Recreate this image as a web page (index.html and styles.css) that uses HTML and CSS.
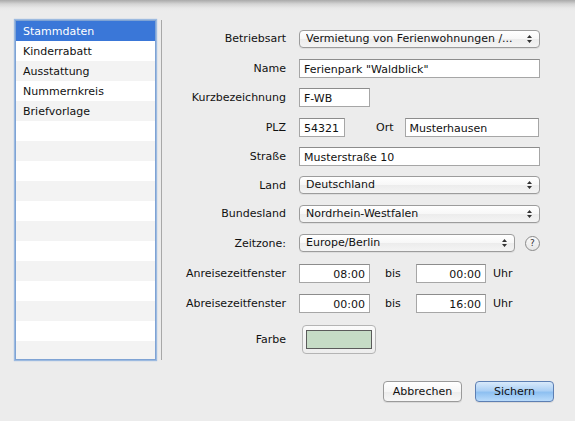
FILE: index.html
```html
<!DOCTYPE html>
<html lang="de">
<head>
<meta charset="utf-8">
<title>Stammdaten</title>
<link rel="stylesheet" href="styles.css">
</head>
<body>
<div class="window">
  <div class="main">
    <div class="sidebar">
      <ul class="list">
        <li class="item selected">Stammdaten</li>
        <li class="item">Kinderrabatt</li>
        <li class="item">Ausstattung</li>
        <li class="item">Nummernkreis</li>
        <li class="item">Briefvorlage</li>
        <li class="item"></li><li class="item"></li><li class="item"></li>
        <li class="item"></li><li class="item"></li><li class="item"></li>
        <li class="item"></li><li class="item"></li><li class="item"></li>
        <li class="item"></li><li class="item"></li><li class="item"></li>
      </ul>
    </div>
    <div class="separator"></div>
    <div class="form">
      <label class="lbl">Betriebsart</label>
      <div class="cell"><div class="popup w-full"><span class="ptext">Vermietung von Ferienwohnungen /...</span><svg class="arrows" width="7" height="10" viewBox="0 0 7 10"><path d="M1 4 L3.5 1 L6 4 Z M1 6 L3.5 9 L6 6 Z" fill="#333"/></svg></div></div>

      <label class="lbl">Name</label>
      <div class="cell"><div class="field w-full">Ferienpark "Waldblick"</div></div>

      <label class="lbl">Kurzbezeichnung</label>
      <div class="cell"><div class="field w-short">F-WB</div></div>

      <label class="lbl">PLZ</label>
      <div class="cell"><div class="field w-plz">54321</div><span class="inlbl ort">Ort</span><div class="field w-ort">Musterhausen</div></div>

      <label class="lbl">Straße</label>
      <div class="cell"><div class="field w-full">Musterstraße 10</div></div>

      <label class="lbl">Land</label>
      <div class="cell"><div class="popup w-full"><span class="ptext">Deutschland</span><svg class="arrows" width="7" height="10" viewBox="0 0 7 10"><path d="M1 4 L3.5 1 L6 4 Z M1 6 L3.5 9 L6 6 Z" fill="#333"/></svg></div></div>

      <label class="lbl">Bundesland</label>
      <div class="cell"><div class="popup w-full"><span class="ptext">Nordrhein-Westfalen</span><svg class="arrows" width="7" height="10" viewBox="0 0 7 10"><path d="M1 4 L3.5 1 L6 4 Z M1 6 L3.5 9 L6 6 Z" fill="#333"/></svg></div></div>

      <label class="lbl">Zeitzone:</label>
      <div class="cell"><div class="popup w-tz"><span class="ptext">Europe/Berlin</span><svg class="arrows" width="7" height="10" viewBox="0 0 7 10"><path d="M1 4 L3.5 1 L6 4 Z M1 6 L3.5 9 L6 6 Z" fill="#333"/></svg></div><span class="help">?</span></div>

      <label class="lbl">Anreisezeitfenster</label>
      <div class="cell"><div class="field w-time right">08:00</div><span class="inlbl bis">bis</span><div class="field w-time2 right">00:00</div><span class="inlbl uhr">Uhr</span></div>

      <label class="lbl">Abreisezeitfenster</label>
      <div class="cell"><div class="field w-time right">00:00</div><span class="inlbl bis">bis</span><div class="field w-time2 right">16:00</div><span class="inlbl uhr">Uhr</span></div>

      <label class="lbl">Farbe</label>
      <div class="cell"><div class="well"><div class="swatch"></div></div></div>
    </div>
  </div>
  <div class="footer">
    <button class="btn">Abbrechen</button>
    <button class="btn default">Sichern</button>
  </div>
</div>
</body>
</html>
```

FILE: styles.css
```css
html, body {
  margin: 0;
  padding: 0;
}
body {
  width: 575px;
  height: 421px;
  overflow: hidden;
  background: #ececec linear-gradient(to bottom, #a9a9a9 0px, #d4d4d4 4px, #e8e8e8 8px, #ececec 11px) no-repeat;
  background-size: 100% 12px;
  font-family: "DejaVu Sans", "Noto Sans", sans-serif;
  font-size: 11px;
  color: #111;
}
.window {
  display: flex;
  flex-direction: column;
}
.main {
  display: flex;
  padding: 19px 0 0 14px;
}
.sidebar {
  width: 143px;
  height: 342px;
  padding: 1px;
  box-sizing: border-box;
}
.list {
  list-style: none;
  margin: 0;
  padding: 0;
  height: 340px;
  border: 1px solid #7fa3d4;
  box-shadow: 0 0 1px 1px rgba(130, 170, 220, 0.75);
  background: #fff;
  overflow: hidden;
  box-sizing: border-box;
}
.item {
  height: 20px;
  line-height: 21px;
  padding-left: 7px;
  background: #fff;
  white-space: nowrap;
}
.item:nth-child(odd) {
  background: #f3f3f3;
}
.item.selected {
  background: #3a77d8;
  color: #fff;
}
.separator {
  width: 1px;
  height: 340px;
  margin: 1px 0 0 4px;
  background: #a8a8a8;
}
.form {
  margin-top: 5px;
  display: grid;
  grid-template-columns: 124px 1fr;
  grid-template-rows: 29px 30px 29px 30px 29px 28px 29px 30px 30px 30px 43px;
  column-gap: 13px;
  width: 413px;
}
.lbl {
  text-align: right;
  align-self: center;
  white-space: nowrap;
}
.cell {
  display: flex;
  align-items: center;
}
.field {
  height: 19px;
  line-height: 19px;
  box-sizing: border-box;
  background: #fff;
  border: 1px solid #a6a6a6;
  border-top-color: #8c8c8c;
  padding: 0 4px;
  white-space: nowrap;
  overflow: hidden;
}
.field.right {
  text-align: right;
}
.w-full { width: 241px; }
.w-short { width: 71px; }
.w-plz { width: 46px; }
.w-ort { width: 134px; }
.w-tz { width: 216px; }
.w-time { width: 71px; }
.w-time2 { width: 70px; }
.inlbl {
  white-space: nowrap;
}
.ort {
  margin: 0 11px 0 31px;
}
.bis {
  margin: 0 14px 0 15px;
  width: 17px;
}
.uhr {
  margin-left: 7px;
}
.popup {
  height: 18px;
  box-sizing: border-box;
  border: 1px solid #9c9c9c;
  border-radius: 4px;
  background: linear-gradient(to bottom, #ffffff 0%, #f7f7f7 50%, #ececec 51%, #f4f4f4 100%);
  box-shadow: 0 1px 0 rgba(0, 0, 0, 0.06);
  display: flex;
  align-items: center;
  justify-content: space-between;
  padding: 0 6px 0 6px;
}
.ptext {
  white-space: nowrap;
  overflow: hidden;
  line-height: 16px;
}
.arrows {
  flex: none;
}
.help {
  margin-left: 10px;
  width: 13px;
  height: 13px;
  border: 1px solid #8a8a8a;
  border-radius: 50%;
  font-size: 9px;
  line-height: 13px;
  text-align: center;
  color: #333;
  background: linear-gradient(to bottom, #fafafa, #e6e6e6);
}
.well {
  margin-left: 3px;
  width: 74px;
  height: 29px;
  box-sizing: border-box;
  border: 1px solid #b4b4b4;
  border-radius: 4px;
  background: linear-gradient(to bottom, #fbfbfb, #ededed);
  padding: 4px 3px;
}
.swatch {
  width: 100%;
  height: 100%;
  box-sizing: border-box;
  border: 1px solid #5b5b5b;
  background: #c6dcc6;
}
.footer {
  display: flex;
  justify-content: flex-end;
  gap: 13px;
  padding: 20px 21px 0 0;
}
.btn {
  width: 79px;
  height: 21px;
  box-sizing: border-box;
  font-family: "DejaVu Sans", "Noto Sans", sans-serif;
  font-size: 11px;
  color: #111;
  border: 1px solid #9a9a9a;
  border-radius: 4px;
  background: linear-gradient(to bottom, #ffffff 0%, #f6f6f6 50%, #ececec 51%, #f7f7f7 100%);
  box-shadow: 0 1px 0 rgba(0, 0, 0, 0.08);
  padding: 0;
}
.btn.default {
  border-color: #5d7fb3;
  background: linear-gradient(to bottom, #d9eafb 0%, #acd0f5 45%, #8ec0f1 55%, #b9dbfb 100%);
}
```
